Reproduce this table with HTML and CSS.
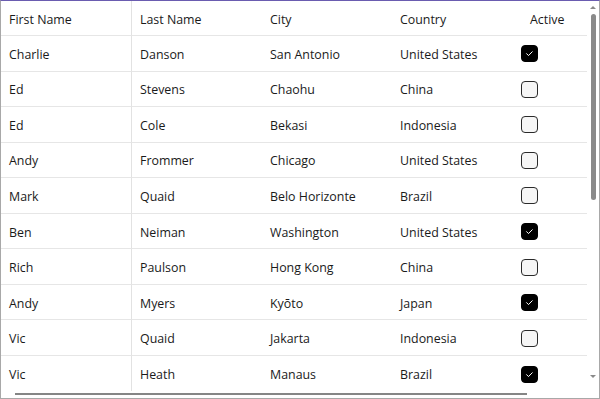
FILE: index.html
```html
<!DOCTYPE html>
<html>
<head>
<meta charset="utf-8">
<link rel="stylesheet" href="styles.css">
</head>
<body>
<div class="frame">
  <div class="viewport">
    <div class="grid">
      <div class="hcell c1">First Name</div>
      <div class="hcell c2">Last Name</div>
      <div class="hcell">City</div>
      <div class="hcell">Country</div>
      <div class="hcell">Active</div>

      <div class="cell c1">Charlie</div><div class="cell c2">Danson</div><div class="cell">San Antonio</div><div class="cell">United States</div><div class="cell chk"><span class="box on"><svg viewBox="0 0 18 18"><path d="M5.5 9.2l2.3 2.3 4.5-4.6"/></svg></span></div>
      <div class="cell c1">Ed</div><div class="cell c2">Stevens</div><div class="cell">Chaohu</div><div class="cell">China</div><div class="cell chk"><span class="box"></span></div>
      <div class="cell c1">Ed</div><div class="cell c2">Cole</div><div class="cell">Bekasi</div><div class="cell">Indonesia</div><div class="cell chk"><span class="box"></span></div>
      <div class="cell c1">Andy</div><div class="cell c2">Frommer</div><div class="cell">Chicago</div><div class="cell">United States</div><div class="cell chk"><span class="box"></span></div>
      <div class="cell c1">Mark</div><div class="cell c2">Quaid</div><div class="cell">Belo Horizonte</div><div class="cell">Brazil</div><div class="cell chk"><span class="box"></span></div>
      <div class="cell c1">Ben</div><div class="cell c2">Neiman</div><div class="cell">Washington</div><div class="cell">United States</div><div class="cell chk"><span class="box on"><svg viewBox="0 0 18 18"><path d="M5.5 9.2l2.3 2.3 4.5-4.6"/></svg></span></div>
      <div class="cell c1">Rich</div><div class="cell c2">Paulson</div><div class="cell">Hong Kong</div><div class="cell">China</div><div class="cell chk"><span class="box"></span></div>
      <div class="cell c1">Andy</div><div class="cell c2">Myers</div><div class="cell">Kyōto</div><div class="cell">Japan</div><div class="cell chk"><span class="box on"><svg viewBox="0 0 18 18"><path d="M5.5 9.2l2.3 2.3 4.5-4.6"/></svg></span></div>
      <div class="cell c1">Vic</div><div class="cell c2">Quaid</div><div class="cell">Jakarta</div><div class="cell">Indonesia</div><div class="cell chk"><span class="box"></span></div>
      <div class="cell c1 last">Vic</div><div class="cell c2 last">Heath</div><div class="cell last">Manaus</div><div class="cell last">Brazil</div><div class="cell chk last"><span class="box on"><svg viewBox="0 0 18 18"><path d="M5.5 9.2l2.3 2.3 4.5-4.6"/></svg></span></div>
    </div>
    <div class="hscroll"><div class="hthumb"></div></div>
  </div>
  <div class="vscroll">
    <div class="arrow up"></div>
    <div class="vthumb"></div>
    <div class="arrow down"></div>
  </div>
</div>
</body>
</html>
```

FILE: styles.css
```css
html, body {
  margin: 0;
  padding: 0;
  background: #ffffff;
}
.frame {
  width: 598px;
  height: 397px;
  border: 1px solid #a8a8a8;
  border-top-color: #6a5cb0;
  display: flex;
  font-family: "Open Sans", "Noto Sans", sans-serif;
  font-size: 12.4px;
  color: #1a1a1a;
  overflow: hidden;
}
.viewport {
  width: 586px;
  display: flex;
  flex-direction: column;
}
.grid {
  display: grid;
  grid-template-columns: 131px 129px 130px 130px 66px;
  grid-template-rows: 35px repeat(10, 35.55px);
}
.hcell, .cell {
  display: flex;
  align-items: center;
  padding-left: 9px;
  padding-top: 2px;
  border-bottom: 1px solid #e6e6e6;
  white-space: nowrap;
}
.hcell {
  padding-top: 3px;
}
.c1 {
  padding-left: 8px;
  border-right: 1px solid #e2e2e2;
}
.c2 {
  padding-left: 8px;
}
.cell.last {
  border-bottom: none;
}
.chk {
  padding-left: 0;
  padding-top: 1px;
}
.box {
  width: 15px;
  height: 15px;
  border: 1.5px solid #2a2a2a;
  border-radius: 4px;
  background: #f6f6f6;
  display: block;
}
.box.on {
  background: #000;
  border-color: #000;
}
.box svg {
  width: 15px;
  height: 15px;
  display: block;
}
.box svg path {
  fill: none;
  stroke: #fff;
  stroke-width: 1.2;
  stroke-linecap: round;
  stroke-linejoin: round;
}
.hscroll {
  margin-top: 1px;
  height: 4px;
  position: relative;
}
.hthumb {
  margin-left: 14px;
  width: 512px;
  height: 2px;
  background: #858585;
  margin-top: 1px;
}
.vscroll {
  width: 12px;
  display: flex;
  flex-direction: column;
  align-items: center;
  padding-top: 5px;
}
.arrow {
  width: 0;
  height: 0;
  border-left: 3px solid transparent;
  border-right: 3px solid transparent;
}
.arrow.up {
  border-bottom: 3px solid #8a8a8a;
}
.arrow.down {
  border-top: 3px solid #8a8a8a;
  margin-top: 175px;
}
.vthumb {
  margin-top: 5px;
  width: 5px;
  height: 186px;
  border-radius: 3px;
  background: #8a8a8a;
}
```
